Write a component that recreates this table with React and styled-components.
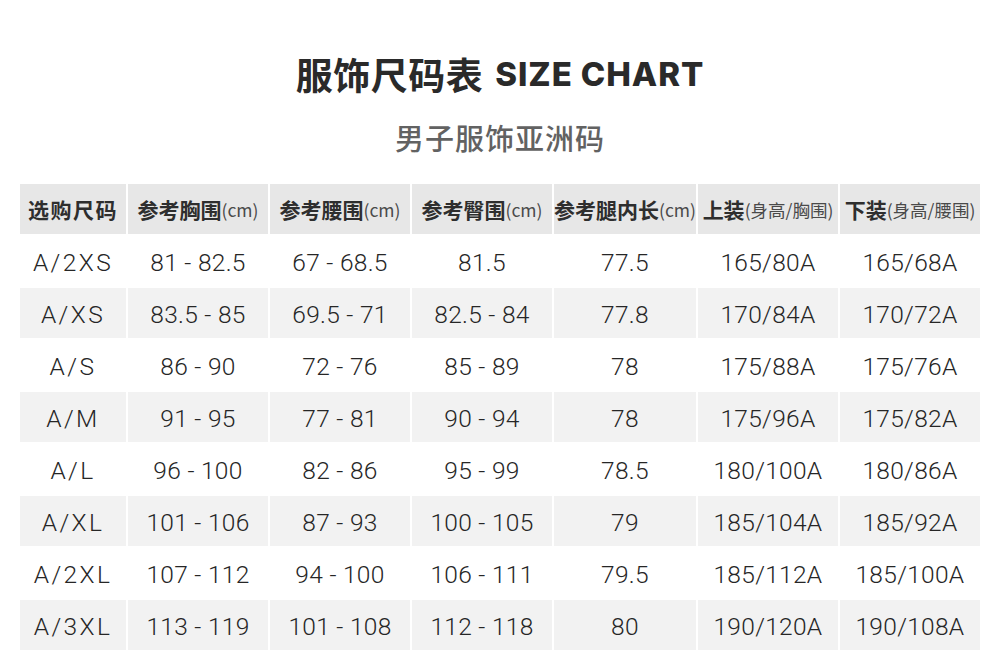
import React from "react";
import styled, { createGlobalStyle } from "styled-components";

const Global = createGlobalStyle`
  html, body { margin: 0; padding: 0; background: #ffffff; }
  body { font-family: "Noto Sans CJK SC", "Noto Sans", sans-serif; }
`;

const Page = styled.div`
  width: 1000px;
  height: 666px;
  box-sizing: border-box;
  padding: 52px 20px 0;
  display: flex;
  flex-direction: column;
  align-items: center;
  overflow: hidden;
`;

const Title = styled.h1`
  margin: 0;
  height: 44px;
  display: flex;
  align-items: center;
  gap: 12px;
  color: #2a2a2a;
`;

const TitleCn = styled.span`
  font-family: "Noto Sans CJK SC", sans-serif;
  font-weight: 700;
  font-size: 37px;
  line-height: 44px;
  letter-spacing: 0.5px;
`;

const TitleEn = styled.span`
  font-family: Inter, "Liberation Sans", sans-serif;
  font-weight: 800;
  font-size: 33px;
  line-height: 44px;
  letter-spacing: 0.9px;
`;

const Subtitle = styled.h2`
  margin: 21px 0 0;
  font-family: "Noto Sans CJK SC", sans-serif;
  font-weight: 500;
  font-size: 29px;
  line-height: 40px;
  letter-spacing: 1px;
  color: #626262;
`;

const Table = styled.div`
  margin-top: 27px;
  width: 960px;
  display: grid;
  grid-template-columns: 106px repeat(6, 1fr);
  grid-auto-rows: 50px;
  gap: 2px;
`;

const HeadCell = styled.div`
  background: #e7e7e7;
  display: flex;
  align-items: center;
  justify-content: center;
  white-space: nowrap;
  color: #2e2e2e;
`;

const HeadMain = styled.span`
  font-family: "Noto Sans CJK SC", sans-serif;
  font-weight: 700;
  font-size: 21px;
  letter-spacing: ${(p) => (p.$wide ? "1.5px" : "0")};
`;

const HeadUnit = styled.span`
  font-family: "Noto Sans CJK SC", sans-serif;
  font-weight: 400;
  font-size: 17.5px;
  color: #4a4a4a;
`;

const Cell = styled.div`
  background: ${(p) => (p.$alt ? "#f2f2f2" : "#ffffff")};
  display: flex;
  align-items: center;
  justify-content: center;
  padding-top: 3px;
  box-sizing: border-box;
  font-family: Roboto, "Noto Sans", sans-serif;
  font-weight: 300;
  font-size: 24.5px;
  color: #262626;
  letter-spacing: ${(p) => (p.$first ? "2.4px" : "0.3px")};
  white-space: nowrap;
`;

const headers = [
  ["选购尺码", ""],
  ["参考胸围", "(cm)"],
  ["参考腰围", "(cm)"],
  ["参考臀围", "(cm)"],
  ["参考腿内长", "(cm)"],
  ["上装", "(身高/胸围)"],
  ["下装", "(身高/腰围)"],
];

const rows = [
  ["A/2XS", "81 - 82.5", "67 - 68.5", "81.5", "77.5", "165/80A", "165/68A"],
  ["A/XS", "83.5 - 85", "69.5 - 71", "82.5 - 84", "77.8", "170/84A", "170/72A"],
  ["A/S", "86 - 90", "72 - 76", "85 - 89", "78", "175/88A", "175/76A"],
  ["A/M", "91 - 95", "77 - 81", "90 - 94", "78", "175/96A", "175/82A"],
  ["A/L", "96 - 100", "82 - 86", "95 - 99", "78.5", "180/100A", "180/86A"],
  ["A/XL", "101 - 106", "87 - 93", "100 - 105", "79", "185/104A", "185/92A"],
  ["A/2XL", "107 - 112", "94 - 100", "106 - 111", "79.5", "185/112A", "185/100A"],
  ["A/3XL", "113 - 119", "101 - 108", "112 - 118", "80", "190/120A", "190/108A"],
];

export default function App() {
  return (
    <>
      <Global />
      <Page>
        <Title>
          <TitleCn>服饰尺码表</TitleCn>
          <TitleEn>SIZE CHART</TitleEn>
        </Title>
        <Subtitle>男子服饰亚洲码</Subtitle>
        <Table>
          {headers.map(([main, unit]) => (
            <HeadCell key={main}>
              <HeadMain $wide={!unit}>{main}</HeadMain>
              {unit && <HeadUnit>{unit}</HeadUnit>}
            </HeadCell>
          ))}
          {rows.map((row, ri) =>
            row.map((v, ci) => (
              <Cell key={`${ri}-${ci}`} $alt={ri % 2 === 1} $first={ci === 0}>
                {v}
              </Cell>
            ))
          )}
        </Table>
      </Page>
    </>
  );
}
